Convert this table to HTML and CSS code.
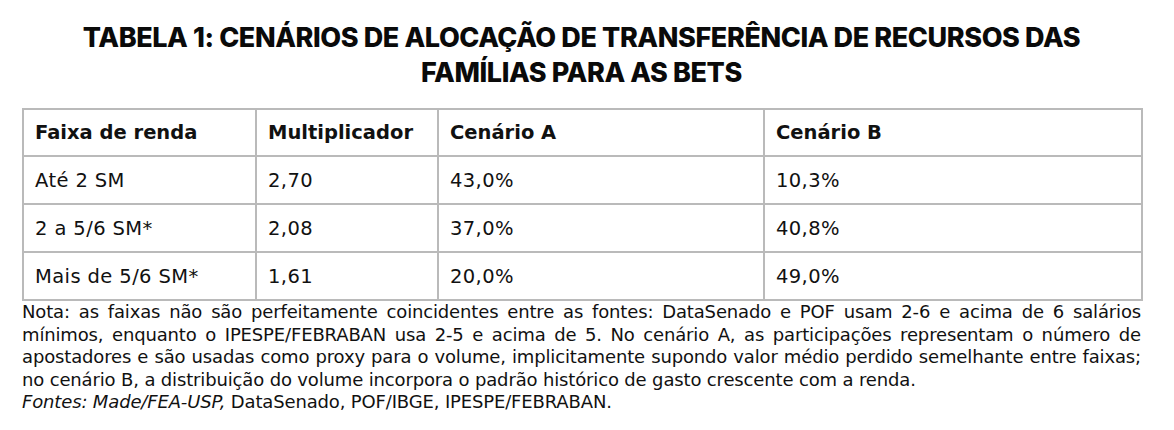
FILE: index.html
```html
<!DOCTYPE html>
<html lang="pt-BR">
<head>
<meta charset="utf-8">
<link rel="stylesheet" href="styles.css">
</head>
<body>
<div class="page">
  <h1 class="title">TABELA 1: CENÁRIOS DE ALOCAÇÃO DE TRANSFERÊNCIA DE RECURSOS DAS<br>FAMÍLIAS PARA AS BETS</h1>
  <table class="data">
    <colgroup>
      <col class="c1"><col class="c2"><col class="c3"><col class="c4">
    </colgroup>
    <thead>
      <tr><th>Faixa de renda</th><th>Multiplicador</th><th>Cenário A</th><th>Cenário B</th></tr>
    </thead>
    <tbody>
      <tr><td>Até 2 SM</td><td>2,70</td><td>43,0%</td><td>10,3%</td></tr>
      <tr><td>2 a 5/6 SM*</td><td>2,08</td><td>37,0%</td><td>40,8%</td></tr>
      <tr><td>Mais de 5/6 SM*</td><td>1,61</td><td>20,0%</td><td>49,0%</td></tr>
    </tbody>
  </table>
  <p class="note">Nota: as faixas não são perfeitamente coincidentes entre as fontes: DataSenado e POF usam 2-6 e acima de 6 salários mínimos, enquanto o IPESPE/FEBRABAN usa 2-5 e acima de 5. No cenário A, as participações representam o número de apostadores e são usadas como proxy para o volume, implicitamente supondo valor médio perdido semelhante entre faixas; no cenário B, a distribuição do volume incorpora o padrão histórico de gasto crescente com a renda.<br><em>Fontes: Made/FEA-USP,</em> DataSenado, POF/IBGE, IPESPE/FEBRABAN.</p>
</div>
</body>
</html>
```

FILE: styles.css
```css
html, body {
  margin: 0;
  padding: 0;
  background: #ffffff;
}

.page {
  width: 1119px;
  padding: 20px 0 0 22px;
  font-family: "DejaVu Sans", sans-serif;
  color: #111111;
}

.title {
  margin: 0 0 18px 0;
  text-align: center;
  font-family: Inter, "DejaVu Sans", sans-serif;
  font-size: 27px;
  line-height: 35px;
  font-weight: 800;
  letter-spacing: -0.4px;
  color: #0a0a0a;
}

.data {
  width: 1119px;
  border-collapse: collapse;
  table-layout: fixed;
  font-size: 19.5px;
}

.c1 { width: 233px; }
.c2 { width: 182px; }
.c3 { width: 326px; }
.c4 { width: 378px; }

.data th,
.data td {
  border: 2px solid #bababa;
  height: 46px;
  padding: 0 11px;
  text-align: left;
  vertical-align: middle;
}

.data th {
  height: 45px;
  font-weight: 700;
  letter-spacing: 0;
}

.data td {
  font-weight: 400;
  letter-spacing: 0.4px;
}

.note {
  margin: 0;
  font-size: 18px;
  line-height: 22.5px;
  text-align: justify;
  letter-spacing: -0.15px;
}

.note em {
  font-style: italic;
}
```
